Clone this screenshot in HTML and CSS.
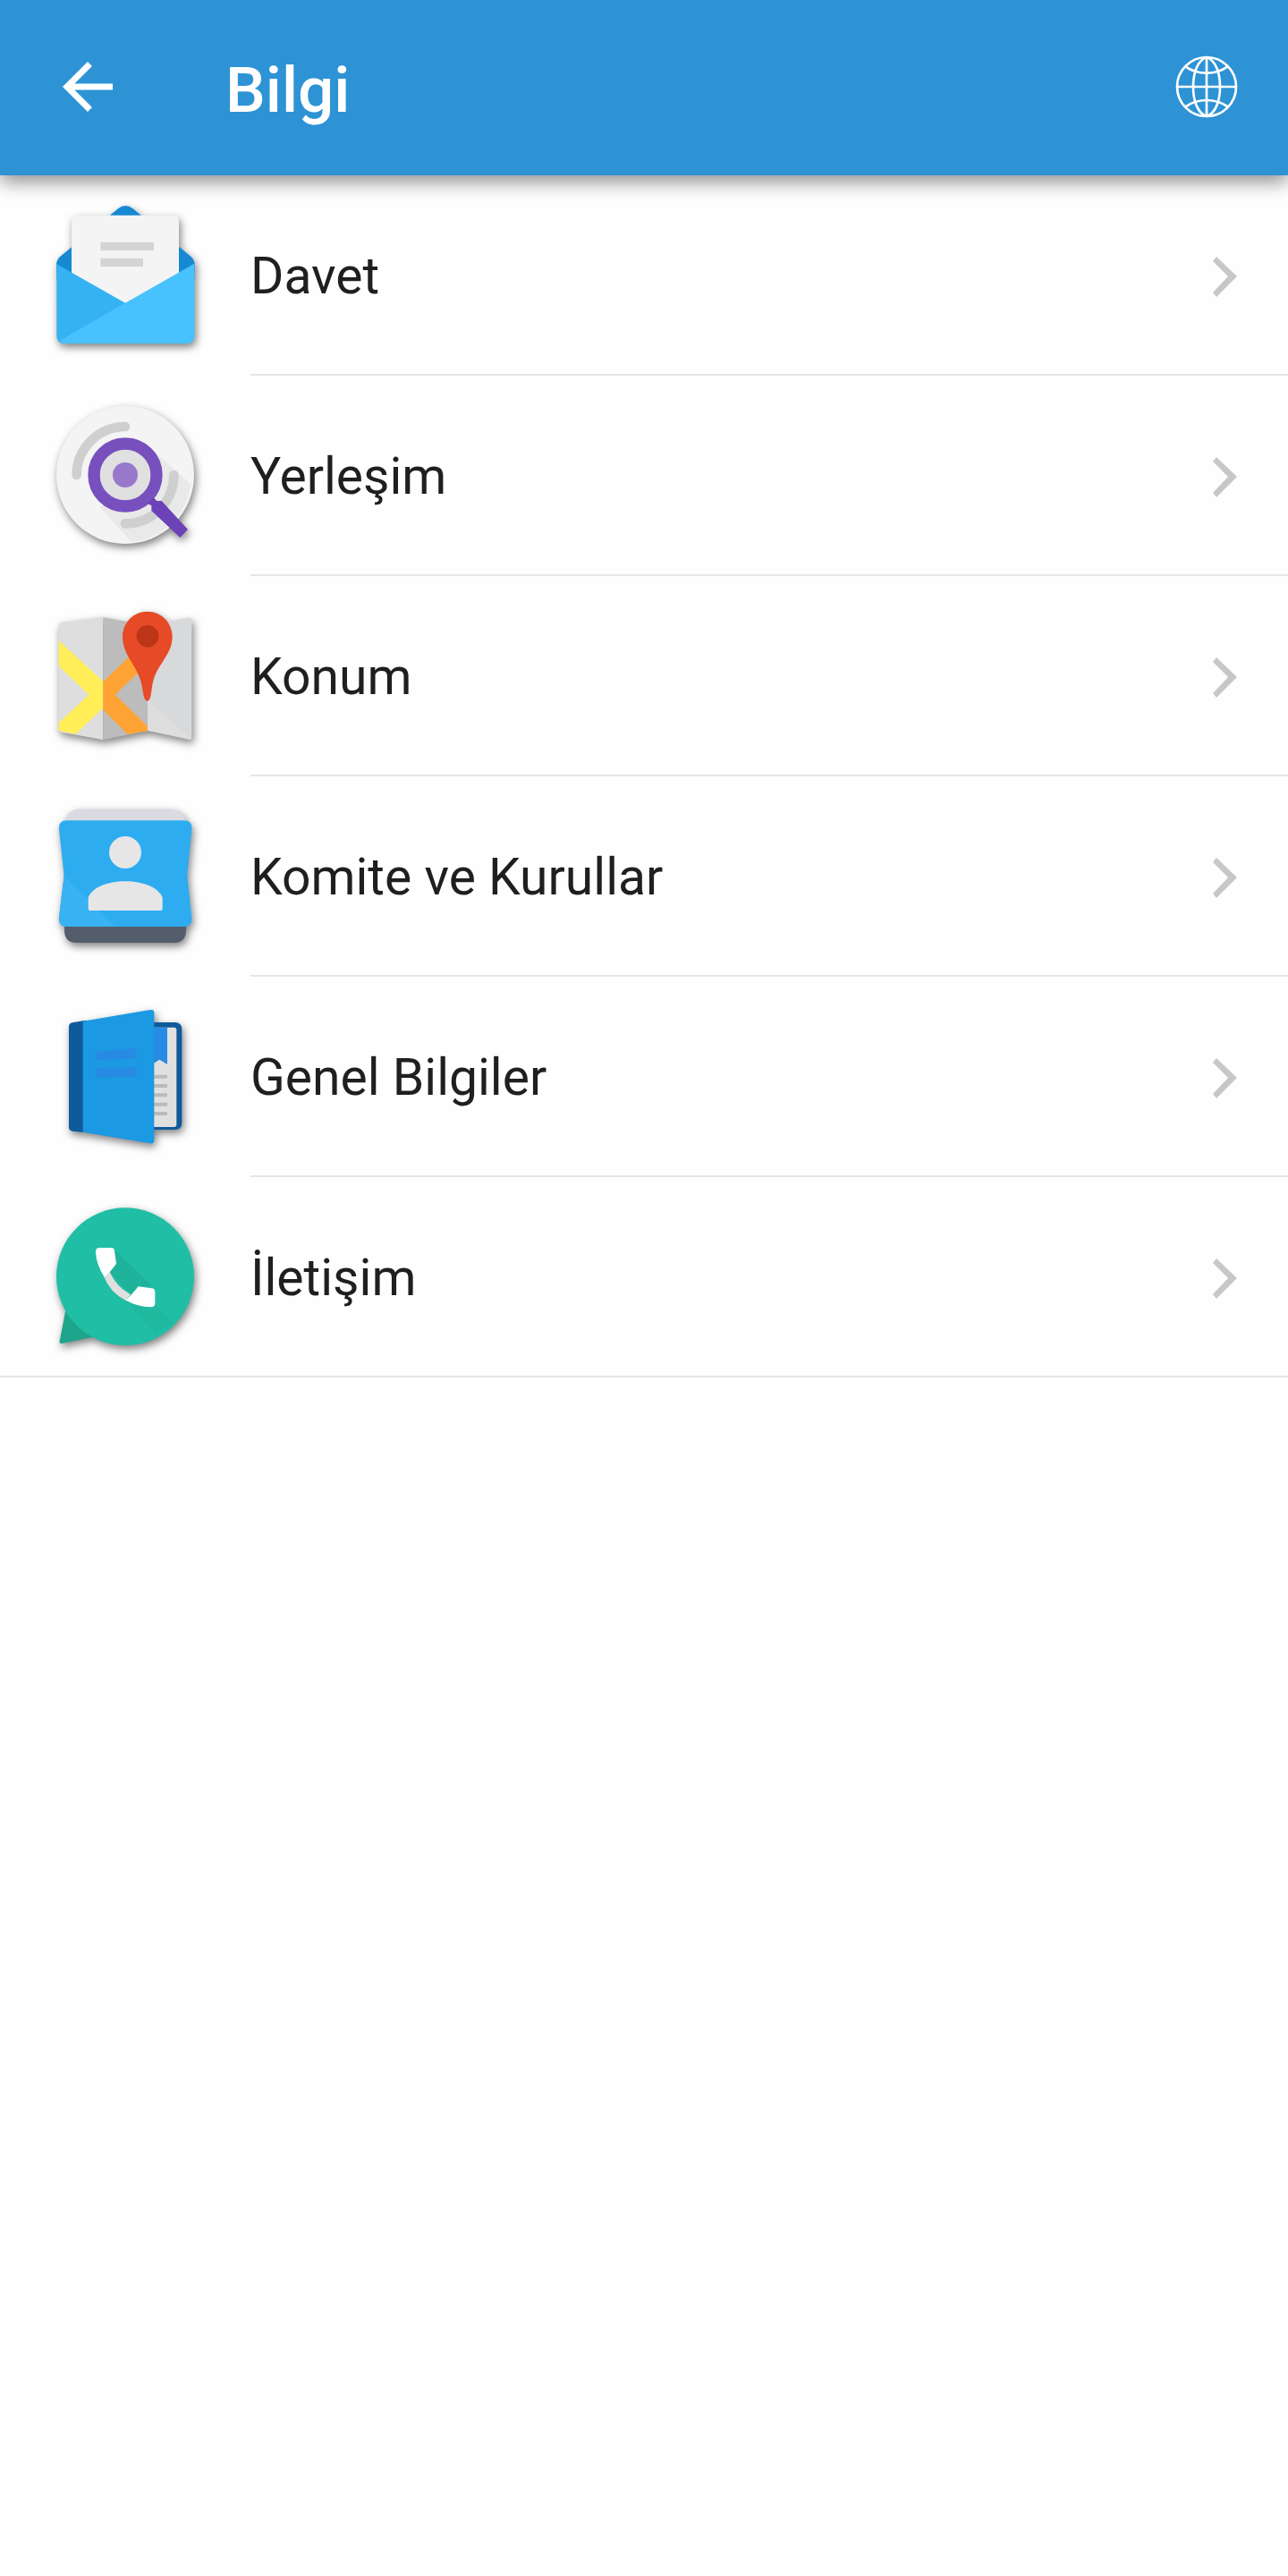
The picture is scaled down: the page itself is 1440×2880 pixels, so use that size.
FILE: index.html
```html
<!DOCTYPE html>
<html lang="tr">
<head>
  <meta charset="UTF-8" />
  <meta name="viewport" content="width=device-width, initial-scale=1.0"/>
  <title>Bilgi</title>
  <link rel="stylesheet" href="styles.css">
</head>
<body>

<header class="toolbar">
  <button class="icon-btn" type="button" aria-label="Geri">
    <svg viewBox="0 0 24 24"><path fill="#fff" d="M20 11H7.830l5.590-5.590L12 4l-8 8 8 8 1.410-1.410L7.830 13H20v-2z"/></svg>
  </button>
  <h1>Bilgi</h1>
  <button class="icon-btn" type="button" aria-label="Dil">
    <svg viewBox="0 0 252 252" fill="none" stroke="#fff" stroke-width="8">
      <circle cx="126" cy="126" r="99"/>
      <path d="M126 27v198M27 126h198"/>
      <path d="M126 27C94 38 81 82 81 126s13 88 45 99M126 27c32 11 45 55 45 99s-13 88-45 99"/>
      <path d="M55 58q31 22 71 22t71-22M55 193q31-22 71-22t71 22"/>
    </svg>
  </button>
</header>

<main>
  <ul class="menu">
    <li>
      <a class="row" href="#davet">
        <svg class="pic" viewBox="0 -3 600 600">
          <path fill="#1789d2" d="M70 258q0-18 12-28L276 70q24-20 50 0L520 230q12 10 12 28v30L300 330 70 288z"/>
          <path fill="#158ad0" d="M70 248h462v60H70z"/>
          <path fill="#f4f4f4" d="M120 112q0-20 20-20h320q20 0 20 20v250L300 400 120 362z"/>
          <path fill="#d4d4d4" d="M217 182h179v28H217zM217 236h143v28H217z"/>
          <path fill="#34b2f2" d="M70 256l230 130v136H96q-26 0-26-26z"/>
          <path fill="#48c2ff" d="M532 254v242q0 26-26 26H96q-10 0-18-8L300 386z"/>
        </svg>
        <span class="label">Davet</span>
        <svg class="chevron" viewBox="0 0 84 84"><path d="M52 20l-4 5 17 17-17 18 4 5 23-23z"/></svg>
      </a>
    </li>
    <li>
      <a class="row" href="#yerlesim">
        <svg class="pic" viewBox="0 -3 600 600">
          <circle cx="300" cy="291" r="231" fill="#f4f4f4"/>
          <path fill="#e9e9e9" d="M388 204l132 118q-14 94-84 148-48 38-114 46l-106-114z"/>
          <path fill="none" stroke="#cfcfcf" stroke-width="32" stroke-linecap="round" d="M137 291A163 163 0 0 1 300 129M463 291A163 163 0 0 1 300 454"/>
          <circle cx="300" cy="291" r="88" fill="#e0e0e0"/>
          <circle cx="300" cy="291" r="105" fill="none" stroke="#7750be" stroke-width="40"/>
          <circle cx="300" cy="291" r="42" fill="#9778cb"/>
          <path fill="#6c42b7" d="M374 388l20-22 12 12h16l88 96-26 27-96-90v-18z"/>
        </svg>
        <span class="label">Yerleşim</span>
        <svg class="chevron" viewBox="0 0 84 84"><path d="M52 20l-4 5 17 17-17 18 4 5 23-23z"/></svg>
      </a>
    </li>
    <li>
      <a class="row" href="#konum">
        <svg class="pic" viewBox="0 -3 600 600">
          <path fill="#dedede" d="M77 126q0-10 10-12l139-18v411L87 482q-10-2-10-10z"/>
          <path fill="#bcbcbc" d="M226 96l149 28v353l-149 30z"/>
          <path fill="#d7d9da" d="M375 124l137-26q11-2 11 8v392q0 11-11 8l-137-30z"/>
          <path fill="#dedede" d="M375 376l148 128-148-28z"/>
          <path fill="#ffee58" d="M77 174l149 138v88l-92 88-57-12v-26l101-94L77 260z"/>
          <path fill="#ffa434" d="M226 312l100-96 49 36-109 104 109 106v15l-67 12-82-82z"/>
          <path fill="#e64a26" d="M374 77c48 0 84 38 84 84 0 62-54 94-66 156-5 26-5 60-18 60s-14-34-20-60c-14-60-63-94-63-156 0-46 36-84 83-84z"/>
          <circle cx="375" cy="160" r="37" fill="#bd3517"/>
        </svg>
        <span class="label">Konum</span>
        <svg class="chevron" viewBox="0 0 84 84"><path d="M52 20l-4 5 17 17-17 18 4 5 23-23z"/></svg>
      </a>
    </li>
    <li>
      <a class="row" href="#komite">
        <svg class="pic" viewBox="0 -3 600 600">
          <path fill="#d9dae2" d="M96 108q14-40 52-40h304q38 0 52 40v40H96z"/>
          <path fill="#545d6b" d="M96 440h408v34q0 42-42 42H138q-42 0-42-42z"/>
          <path fill="#2dacf0" d="M105 106h391q30 0 27 30l-15 154 15 142q3 30-27 30H105q-30 0-27-30l17-142-17-154q-3-30 27-30z"/>
          <path fill="#38b2f2" d="M95 290l172 172H105q-30 0-27-30z"/>
          <circle cx="300" cy="213" r="54" fill="#e6e6e6"/>
          <path fill="#e6e6e6" d="M176 364c14-34 64-54 124-54s110 20 125 54v38q0 6-6 6H182q-6 0-6-6z"/>
        </svg>
        <span class="label">Komite ve Kurullar</span>
        <svg class="chevron" viewBox="0 0 84 84"><path d="M52 20l-4 5 17 17-17 18 4 5 23-23z"/></svg>
      </a>
    </li>
    <li>
      <a class="row" href="#genel">
        <svg class="pic" viewBox="0 -3 600 600">
          <path fill="#0f5a9b" d="M370 111h96q24 0 24 24v312q0 24-24 24h-96z"/>
          <path fill="#e0e0e0" d="M380 128h84q8 0 8 8v318q0 8-8 8h-84z"/>
          <path fill="#278be3" d="M390 128h51v124l-26-16-25 16z"/>
          <path fill="#bababa" d="M390 287h51v12h-51zM390 318h51v12h-51zM390 349h51v12h-51zM390 380h51v12h-51zM390 411h51v12h-51z"/>
          <path fill="#0f5a9b" d="M111 126q0-12 12-14l45-8v376l-45-4q-12-2-12-14z"/>
          <path fill="#1b99e3" d="M158 107l226-38q13-2 13 10v428q0 12-13 10l-226-38z"/>
          <path fill="#278be3" d="M201 210l136-12v34l-136 6zM201 265l138-4v32l-138 3z"/>
        </svg>
        <span class="label">Genel Bilgiler</span>
        <svg class="chevron" viewBox="0 0 84 84"><path d="M52 20l-4 5 17 17-17 18 4 5 23-23z"/></svg>
      </a>
    </li>
    <li>
      <a class="row" href="#iletisim">
        <svg class="pic" viewBox="0 -3 600 600">
          <path fill="#1da58c" d="M101 400L80 508q-2 10 8 8l112-23z"/>
          <circle cx="300" cy="292" r="231" fill="#20bea5"/>
          <path fill="#1fb39b" d="M262 200l128 122-44 6-30 22-70-74 24-26z"/>
          <path fill="#1fb9a0" d="M300 374l100 10 60 60-58 42z"/>
          <path fill="#e0e0e0" d="M228 290l20-14q22 50 70 76l-16 20q-54-28-74-82z"/>
          <path fill="#fff" d="M213 195h40q10 0 11 10l6 44-22 28-18 16q-28-44-29-84 0-14 12-14zM302 371l20-20 22-26 44 6q12 1 12 12v38q0 13-14 13-46-1-84-23z"/>
        </svg>
        <span class="label">İletişim</span>
        <svg class="chevron" viewBox="0 0 84 84"><path d="M52 20l-4 5 17 17-17 18 4 5 23-23z"/></svg>
      </a>
    </li>
  </ul>
</main>

</body>
</html>
```

FILE: styles.css
```css
:root {
  --primary: #2d93d5;
  --text: #1f1f1f;
  --divider: #e6e6e6;
  --chevron: #c7c7c7;
}

* {
  margin: 0;
  padding: 0;
  box-sizing: border-box;
}

body {
  font-family: Roboto, sans-serif;
  background: #fefefe;
  color: var(--text);
}

svg {
  display: block;
  flex: none;
}

/* top bar */
.toolbar {
  position: relative;
  display: flex;
  align-items: flex-start;
  min-height: 196px;
  padding: 55px 49px 0 56px;
  background: var(--primary);
  color: #fff;
  box-shadow: 0 7px 20px rgba(0, 0, 0, 0.45);
}

.toolbar h1 {
  flex: 1;
  margin-left: 112px;
  font-size: 71px;
  font-weight: 500;
  line-height: 92px;
}

.icon-btn {
  width: 84px;
  height: 84px;
  border: 0;
  background: none;
  cursor: pointer;
}

/* list */
.menu {
  list-style: none;
}

.row {
  display: flex;
  align-items: center;
  height: 224px;
  padding: 2px 48px 0 40px;
  color: inherit;
  text-decoration: none;
  /* divider starts under the label */
  background: linear-gradient(var(--divider), var(--divider)) 280px 100% / 100% 2px no-repeat;
}

.menu li:last-child .row {
  background-position: 0 100%;
}

.pic {
  width: 200px;
  height: 200px;
  filter: drop-shadow(2px 4px 5px rgba(0, 0, 0, 0.5));
}

.label {
  flex: 1;
  margin-left: 40px;
  font-size: 57px;
  line-height: 72px;
}

.chevron {
  width: 84px;
  height: 84px;
  fill: var(--chevron);
}
```
